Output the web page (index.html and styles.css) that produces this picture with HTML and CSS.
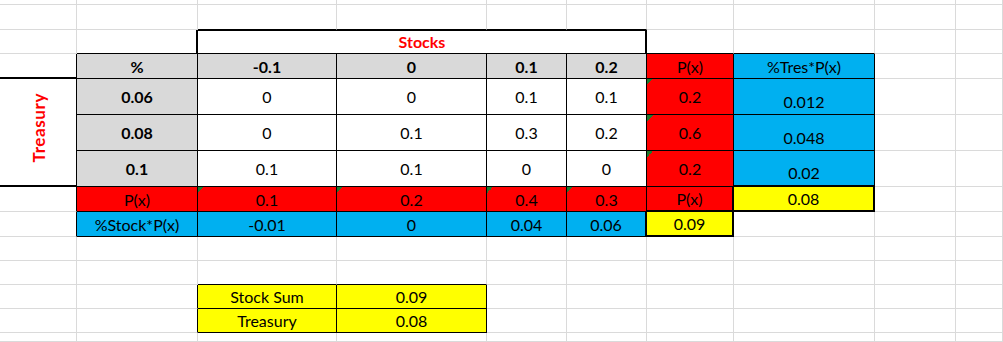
FILE: index.html
```html
<!DOCTYPE html>
<html>
<head>
<meta charset="utf-8">
<link rel="stylesheet" href="styles.css">
</head>
<body>
<div class="sheet">
  <!-- row 0 -->
  <div></div><div></div><div></div><div></div><div></div><div></div><div></div><div></div><div></div><div></div>
  <!-- row 1 -->
  <div></div><div></div><div class="bb"></div><div class="bb"></div><div class="bb"></div><div class="bb"></div><div></div><div></div><div></div><div></div>
  <!-- row 2 -->
  <div></div>
  <div class="br2 bb"></div>
  <div class="span4 br bb stocks">Stocks</div>
  <div class="bb"></div><div class="bb"></div><div></div><div></div>
  <!-- row 3 -->
  <div class="br bb2"></div>
  <div class="t gray b">%</div>
  <div class="t gray b">-0.1</div>
  <div class="t gray b">0</div>
  <div class="t gray b">0.1</div>
  <div class="t gray b">0.2</div>
  <div class="t red">P(x)</div>
  <div class="t blue">%Tres*P(x)</div>
  <div></div><div></div>
  <!-- row 4 -->
  <div class="rows3 br bb2 treasury"><span>Treasury</span></div>
  <div class="t gray b">0.06</div>
  <div class="t">0</div>
  <div class="t">0</div>
  <div class="t">0.1</div>
  <div class="t">0.1</div>
  <div class="t red tri">0.2</div>
  <div class="t blue bot">0.012</div>
  <div></div><div></div>
  <!-- row 5 -->
  <div class="t gray b">0.08</div>
  <div class="t">0</div>
  <div class="t">0.1</div>
  <div class="t">0.3</div>
  <div class="t">0.2</div>
  <div class="t red tri">0.6</div>
  <div class="t blue bot">0.048</div>
  <div></div><div></div>
  <!-- row 6 -->
  <div class="t gray b">0.1</div>
  <div class="t">0.1</div>
  <div class="t">0.1</div>
  <div class="t">0</div>
  <div class="t">0</div>
  <div class="t red tri">0.2</div>
  <div class="br bb2 blue bot">0.02</div>
  <div></div><div></div>
  <!-- row 7 -->
  <div class="br"></div>
  <div class="t red">P(x)</div>
  <div class="t red tri">0.1</div>
  <div class="t red tri">0.2</div>
  <div class="t red tri">0.4</div>
  <div class="t red tri">0.3</div>
  <div class="br2 bb2 red">P(x)</div>
  <div class="br2 bb2 yellow">0.08</div>
  <div></div><div></div>
  <!-- row 8 -->
  <div class="br"></div>
  <div class="t blue">%Stock*P(x)</div>
  <div class="t blue">-0.01</div>
  <div class="t blue">0</div>
  <div class="t blue">0.04</div>
  <div class="br2 bb blue">0.06</div>
  <div class="br2 bb2 yellow">0.09</div>
  <div></div><div></div><div></div>
  <!-- row 9 -->
  <div></div><div></div><div></div><div></div><div></div><div></div><div></div><div></div><div></div><div></div>
  <!-- row 10 -->
  <div></div><div></div><div class="bb"></div><div class="bb"></div><div></div><div></div><div></div><div></div><div></div><div></div>
  <!-- row 11 -->
  <div></div><div class="br"></div>
  <div class="t yellow">Stock Sum</div>
  <div class="t yellow">0.09</div>
  <div></div><div></div><div></div><div></div><div></div><div></div>
  <!-- row 12 -->
  <div></div><div class="br"></div>
  <div class="t yellow">Treasury</div>
  <div class="t yellow">0.08</div>
  <div></div><div></div><div></div><div></div><div></div><div></div>
  <!-- row 13 -->
  <div></div><div></div><div></div><div></div><div></div><div></div><div></div><div></div><div></div><div></div>
</div>
</body>
</html>
```
FILE: styles.css
```css
* {
  box-sizing: border-box;
}

body {
  margin: 0;
  background: #ffffff;
  font-family: Lato, "Open Sans", sans-serif;
  font-size: 16px;
  color: #000000;
}

.sheet {
  display: grid;
  width: 1003px;
  height: 342px;
  grid-template-columns: 77px 121px 139px 150px 80px 80px 87px 141px 81px 1fr;
  grid-template-rows: 5px 25px 24px 25px 36px 36px 36px 25px 25px 24px 24px 24px 24px 1fr;
  overflow: hidden;
}

:where(.sheet > div) {
  border-right: 1px solid #dadada;
  border-bottom: 1px solid #dadada;
  display: flex;
  align-items: center;
  justify-content: center;
  white-space: nowrap;
  overflow: hidden;
}

.t {
  border-right-color: #000000;
  border-bottom-color: #000000;
}

.br {
  border-right-color: #000000;
}

.bb {
  border-bottom-color: #000000;
}

.br2 {
  border-right: 2px solid #000000;
}

.bb2 {
  border-bottom: 2px solid #000000;
}

.span4 {
  grid-column: span 4;
}

.rows3 {
  grid-row: span 3;
}

.b {
  font-weight: 700;
}

.gray {
  background-color: #d9d9d9;
}

.red {
  background-color: #ff0000;
}

.blue {
  background-color: #00b0f0;
}

.yellow {
  background-color: #ffff00;
}

.tri {
  background-image: linear-gradient(to bottom right, #1f7a2e 50%, transparent 50%);
  background-size: 6px 6px;
  background-repeat: no-repeat;
  background-position: top left;
}

.bot {
  align-items: flex-end;
  padding-bottom: 3px;
}

.stocks {
  color: #ff0000;
  font-weight: 700;
  box-shadow: inset 0 1px 0 #000000, inset -1px 0 0 #000000;
}

.treasury {
  padding-bottom: 8px;
}

.treasury span {
  color: #ff0000;
  font-weight: 700;
  font-size: 17px;
  letter-spacing: 0.6px;
  writing-mode: vertical-rl;
  transform: rotate(180deg);
}
```
